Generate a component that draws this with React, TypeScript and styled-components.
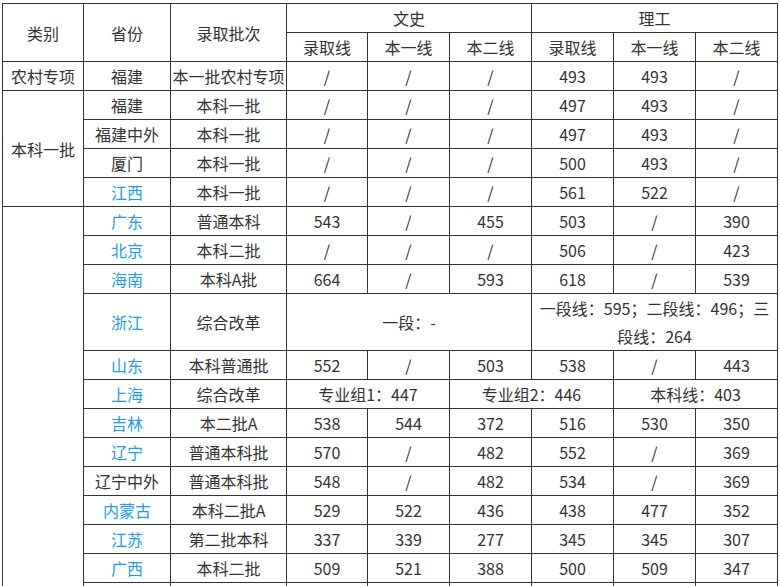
import React from 'react';
import styled, { createGlobalStyle } from 'styled-components';

const GlobalStyle = createGlobalStyle`
  html, body {
    margin: 0;
    padding: 0;
    background: #fff;
    overflow: hidden;
  }
  body {
    font-family: "Noto Sans CJK SC", "Noto Sans", sans-serif;
    color: #333;
  }
`;

const Page = styled.div`
  padding: 3px 0 0 2px;
`;

const Table = styled.table`
  border-collapse: collapse;
  table-layout: fixed;
  width: 775px;
  font-size: 16px;
  color: #333;
`;

const Cell = styled.td<{ $link?: boolean }>`
  border: 1px solid #333;
  padding: 0 1px;
  height: 28px;
  line-height: 28px;
  text-align: center;
  vertical-align: middle;
  font-weight: normal;
  white-space: normal;
  color: ${(p) => (p.$link ? '#1a9df5' : '#333')};
`;

const HeadCell = styled(Cell).attrs({ as: 'th' })``;

const widths = [81, 87, 116, 81, 82, 82, 82, 82, 82];

type Row = {
  cat?: { text: string; span: number };
  prov: string;
  link?: boolean;
  batch: string;
  cells: { text: React.ReactNode; span?: number }[];
};

const plain = (...vals: string[]) => vals.map((text) => ({ text }));

const rows: Row[] = [
  { cat: { text: '农村专项', span: 1 }, prov: '福建', batch: '本一批农村专项', cells: plain('/', '/', '/', '493', '493', '/') },
  { cat: { text: '本科一批', span: 4 }, prov: '福建', batch: '本科一批', cells: plain('/', '/', '/', '497', '493', '/') },
  { prov: '福建中外', batch: '本科一批', cells: plain('/', '/', '/', '497', '493', '/') },
  { prov: '厦门', batch: '本科一批', cells: plain('/', '/', '/', '500', '493', '/') },
  { prov: '江西', link: true, batch: '本科一批', cells: plain('/', '/', '/', '561', '522', '/') },
  { cat: { text: '', span: 14 }, prov: '广东', link: true, batch: '普通本科', cells: plain('543', '/', '455', '503', '/', '390') },
  { prov: '北京', link: true, batch: '本科二批', cells: plain('/', '/', '/', '506', '/', '423') },
  { prov: '海南', link: true, batch: '本科A批', cells: plain('664', '/', '593', '618', '/', '539') },
  {
    prov: '浙江',
    link: true,
    batch: '综合改革',
    cells: [
      { text: '一段：-', span: 3 },
      { text: <>一段线：595；二段线：496；三<br />段线：264</>, span: 3 },
    ],
  },
  { prov: '山东', link: true, batch: '本科普通批', cells: plain('552', '/', '503', '538', '/', '443') },
  {
    prov: '上海',
    link: true,
    batch: '综合改革',
    cells: [
      { text: '专业组1：447', span: 2 },
      { text: '专业组2：446', span: 2 },
      { text: '本科线：403', span: 2 },
    ],
  },
  { prov: '吉林', link: true, batch: '本二批A', cells: plain('538', '544', '372', '516', '530', '350') },
  { prov: '辽宁', link: true, batch: '普通本科批', cells: plain('570', '/', '482', '552', '/', '369') },
  { prov: '辽宁中外', batch: '普通本科批', cells: plain('548', '/', '482', '534', '/', '369') },
  { prov: '内蒙古', link: true, batch: '本科二批A', cells: plain('529', '522', '436', '438', '477', '352') },
  { prov: '江苏', link: true, batch: '第二批本科', cells: plain('337', '339', '277', '345', '345', '307') },
  { prov: '广西', link: true, batch: '本科二批', cells: plain('509', '521', '388', '500', '509', '347') },
  // next row only shows its top border at the bottom edge of the view
  { prov: '', batch: '', cells: plain('', '', '', '', '', '') },
];

const App: React.FC = () => {
  return (
    <Page>
      <GlobalStyle />
      <Table>
        <colgroup>
          {widths.map((w, i) => (
            <col key={i} style={{ width: w }} />
          ))}
        </colgroup>
        <thead>
          <tr>
            <HeadCell rowSpan={2}>类别</HeadCell>
            <HeadCell rowSpan={2}>省份</HeadCell>
            <HeadCell rowSpan={2}>录取批次</HeadCell>
            <HeadCell colSpan={3}>文史</HeadCell>
            <HeadCell colSpan={3}>理工</HeadCell>
          </tr>
          <tr>
            <HeadCell>录取线</HeadCell>
            <HeadCell>本一线</HeadCell>
            <HeadCell>本二线</HeadCell>
            <HeadCell>录取线</HeadCell>
            <HeadCell>本一线</HeadCell>
            <HeadCell>本二线</HeadCell>
          </tr>
        </thead>
        <tbody>
          {rows.map((r, i) => (
            <tr key={i}>
              {r.cat && <Cell rowSpan={r.cat.span}>{r.cat.text}</Cell>}
              <Cell $link={r.link}>{r.prov}</Cell>
              <Cell>{r.batch}</Cell>
              {r.cells.map((c, j) => (
                <Cell key={j} colSpan={c.span}>
                  {c.text}
                </Cell>
              ))}
            </tr>
          ))}
        </tbody>
      </Table>
    </Page>
  );
};

export default App;
